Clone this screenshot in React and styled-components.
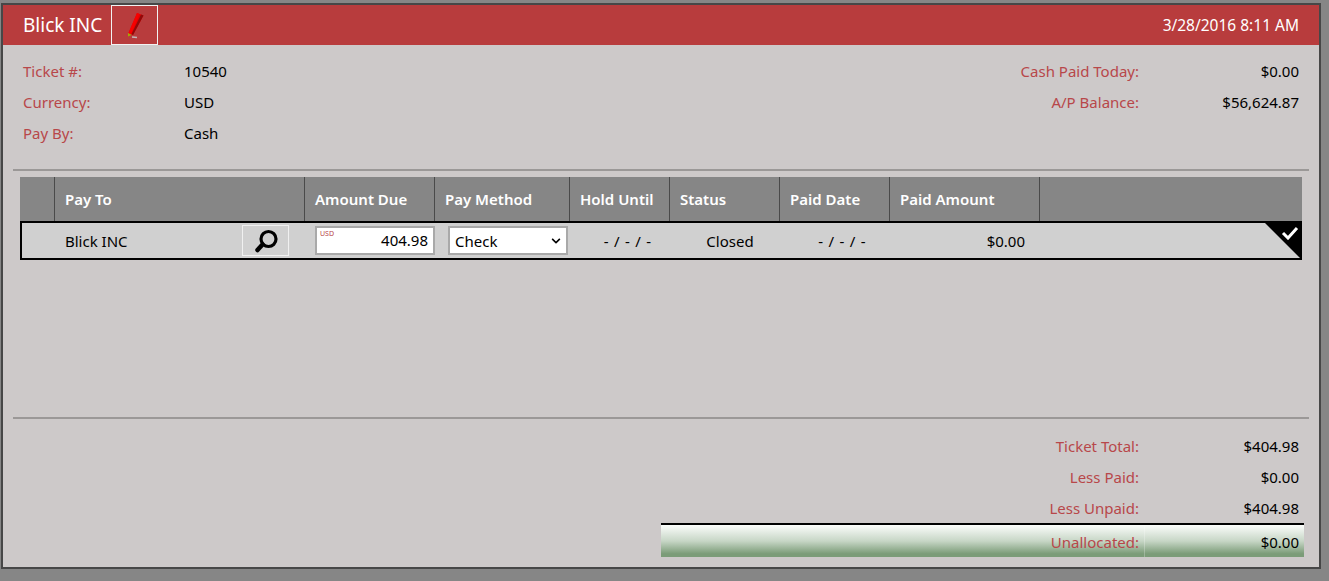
import React from 'react';
import styled, { createGlobalStyle } from 'styled-components';
import { FaChevronDown } from 'react-icons/fa';

const columns = '35px 250px 130px 135px 100px 110px 110px 150px 1fr';

const GlobalStyle = createGlobalStyle`
  html, body {
    margin: 0;
    height: 581px;
    overflow: hidden;
    background: #868686;
    font-family: "Noto Sans", "Open Sans", sans-serif;
    font-size: 15px;
    color: #000;
  }
`;

const Panel = styled.main`
  box-sizing: border-box;
  width: 1320px;
  height: 566px;
  margin: 3px 0 0 1px;
  border: 2px solid #474747;
  background: #cdc9c9;
`;

const TopBar = styled.header`
  display: flex;
  align-items: center;
  height: 40px;
  padding: 0 20px;
  background: #b83c3d;
  color: #fff;
`;

const Title = styled.h1`
  margin: 0 9px 0 0;
  font-size: 19px;
  font-weight: 400;
`;

const EditButton = styled.button`
  display: flex;
  align-items: center;
  justify-content: center;
  box-sizing: border-box;
  width: 47px;
  height: 40px;
  padding: 0;
  border: 1px solid #f2f2f2;
  background: transparent;
`;

const Stamp = styled.span`
  margin-left: auto;
  font-size: 15.5px;
`;

const Summary = styled.section`
  display: flex;
  justify-content: space-between;
  height: 114px;
  padding: 10px 20px 0;
`;

const Fields = styled.div`
  display: flex;
  flex-direction: column;
`;

const FieldRow = styled.div`
  display: grid;
  grid-template-columns: ${(p) => p.$columns};
  align-items: center;
  height: 31px;
`;

const Label = styled.span`
  color: #b8474a;
  text-align: ${(p) => (p.$right ? 'right' : 'left')};
`;

const Value = styled.span`
  text-align: ${(p) => (p.$right ? 'right' : 'left')};
`;

const Rule = styled.hr`
  box-sizing: border-box;
  height: 2px;
  margin: 0 10px;
  border: 0;
  background: #9b9897;
`;

const Grid = styled.section`
  height: 240px;
  margin: 6px 0 0 17px;
  width: 1282px;
`;

const HeaderRow = styled.div`
  display: grid;
  grid-template-columns: ${columns};
  height: 44px;
  background: #868686;
`;

const HeaderCell = styled.div`
  display: flex;
  align-items: center;
  padding-left: 10px;
  border-right: 1px solid ${(p) => (p.$last ? 'transparent' : '#4a4a4a')};
  color: #fff;
  font-weight: 600;
  white-space: nowrap;
`;

const DataRow = styled.div`
  position: relative;
  display: grid;
  grid-template-columns: ${columns};
  align-items: center;
  box-sizing: border-box;
  height: 39px;
  border: 2px solid #000;
  background: #d0d0d0;
`;

const Cell = styled.div`
  display: flex;
  align-items: center;
  justify-content: ${(p) => p.$justify || 'flex-start'};
  padding: ${(p) => p.$padding || '0'};
`;

const DateDash = styled(Cell)`
  word-spacing: 1.5px;
`;

const PayTo = styled(Cell)`
  justify-content: space-between;
  padding: 0 18px 0 8px;
`;

const SearchButton = styled.button`
  display: flex;
  align-items: center;
  justify-content: center;
  box-sizing: border-box;
  width: 47px;
  height: 31px;
  padding: 0;
  border: 1px solid #f0f0f0;
  background: transparent;
`;

const AmountBox = styled.div`
  position: relative;
  box-sizing: border-box;
  width: 120px;
  height: 29px;
  margin-left: 8px;
  padding-right: 5px;
  border: 2px solid #a9a9a9;
  background: #fff;
  line-height: 25px;
  text-align: right;
`;

const Currency = styled.span`
  position: absolute;
  top: 1px;
  left: 3px;
  color: #b8474a;
  font-size: 7px;
  line-height: 9px;
`;

const SelectBox = styled.div`
  display: flex;
  align-items: center;
  justify-content: space-between;
  box-sizing: border-box;
  width: 120px;
  height: 29px;
  margin-left: 11px;
  padding: 0 5px 0 5px;
  border: 2px solid #a9a9a9;
  background: #fff;
`;

const Corner = styled.div`
  position: absolute;
  top: 0;
  right: 0;
  width: 35px;
  height: 35px;
  background: #000;
  clip-path: polygon(0 0, 100% 0, 100% 100%);
`;

const CheckMark = styled.svg`
  position: absolute;
  top: 3px;
  right: 1px;
`;

const Totals = styled.section`
  display: flex;
  flex-direction: column;
  align-items: flex-end;
  padding: 11px 15px 0 0;
`;

const TotalRow = styled(FieldRow)`
  width: 643px;
`;

const AllocBar = styled.div`
  display: grid;
  grid-template-columns: 483px 1fr;
  align-items: center;
  box-sizing: border-box;
  width: 643px;
  height: 34px;
  border-top: 2px solid #000;
  background: linear-gradient(#fbfdfb 0%, #c7d6c6 50%, #7b9c78 90%, #7b9c78 100%);
`;

const BarLabel = styled(Label)`
  padding: 2px 5px 0 0;
  text-align: right;
`;

const BarValue = styled(Value)`
  align-self: stretch;
  display: flex;
  align-items: center;
  justify-content: flex-end;
  padding: 2px 5px 0 0;
  border-left: 1px solid rgba(255, 255, 255, 0.25);
`;

const PencilIcon = () => (
  <svg width="24" height="30" viewBox="0 0 24 30">
    <path d="M14 3 L20.5 5.5 L10 25 L5.5 23 Z" fill="#e80000" />
    <path d="M14 3 L16.5 4 L8 24 L5.5 23 Z" fill="#f80000" />
    <path d="M18 4.5 L20.5 5.5 L10 25 L8.5 24 Z" fill="#8f0a0a" />
    <path d="M5 23 L8.5 25 L5 26.5 Z" fill="#a8a800" />
    <path d="M9 27 L14 27.5" stroke="#c4b8b8" strokeWidth="1.5" />
  </svg>
);

const MagnifierIcon = () => (
  <svg width="24" height="24" viewBox="0 0 24 24">
    <circle cx="14.5" cy="10" r="7.5" fill="none" stroke="#000" strokeWidth="3.2" />
    <path d="M8.5 15.5 L3.5 21" stroke="#000" strokeWidth="4.5" strokeLinecap="round" />
  </svg>
);

const headers = ['', 'Pay To', 'Amount Due', 'Pay Method', 'Hold Until', 'Status', 'Paid Date', 'Paid Amount', ''];

export default function App() {
  return (
    <Panel>
      <GlobalStyle />
      <TopBar>
        <Title>Blick INC</Title>
        <EditButton><PencilIcon /></EditButton>
        <Stamp>3/28/2016 8:11 AM</Stamp>
      </TopBar>
      <Summary>
        <Fields>
          <FieldRow $columns="161px 100px"><Label>Ticket #:</Label><Value>10540</Value></FieldRow>
          <FieldRow $columns="161px 100px"><Label>Currency:</Label><Value>USD</Value></FieldRow>
          <FieldRow $columns="161px 100px"><Label>Pay By:</Label><Value>Cash</Value></FieldRow>
        </Fields>
        <Fields>
          <FieldRow $columns="160px 160px"><Label $right>Cash Paid Today:</Label><Value $right>$0.00</Value></FieldRow>
          <FieldRow $columns="160px 160px"><Label $right>A/P Balance:</Label><Value $right>$56,624.87</Value></FieldRow>
        </Fields>
      </Summary>
      <Rule />
      <Grid>
        <HeaderRow>
          {headers.map((text, i) => (
            <HeaderCell key={i} $last={i === headers.length - 1}>{text}</HeaderCell>
          ))}
        </HeaderRow>
        <DataRow>
          <Cell />
          <PayTo>
            <span>Blick INC</span>
            <SearchButton><MagnifierIcon /></SearchButton>
          </PayTo>
          <Cell>
            <AmountBox><Currency>USD</Currency>404.98</AmountBox>
          </Cell>
          <Cell>
            <SelectBox><span>Check</span><FaChevronDown size={10} /></SelectBox>
          </Cell>
          <DateDash $justify="center" $padding="0 0 0 11px">- / - / -</DateDash>
          <Cell $justify="center" $padding="0 0 0 6px">Closed</Cell>
          <DateDash $justify="center" $padding="0 0 0 10px">- / - / -</DateDash>
          <Cell $justify="flex-end" $padding="0 17px 0 0">$0.00</Cell>
          <Cell />
          <Corner>
            <CheckMark width="18" height="14" viewBox="0 0 18 14">
              <path d="M2 7 L7 12 L16 2" fill="none" stroke="#fff" strokeWidth="3" />
            </CheckMark>
          </Corner>
        </DataRow>
      </Grid>
      <Rule />
      <Totals>
        <TotalRow $columns="478px 160px"><Label $right>Ticket Total:</Label><Value $right>$404.98</Value></TotalRow>
        <TotalRow $columns="478px 160px"><Label $right>Less Paid:</Label><Value $right>$0.00</Value></TotalRow>
        <TotalRow $columns="478px 160px"><Label $right>Less Unpaid:</Label><Value $right>$404.98</Value></TotalRow>
        <AllocBar>
          <BarLabel>Unallocated:</BarLabel>
          <BarValue>$0.00</BarValue>
        </AllocBar>
      </Totals>
    </Panel>
  );
}
